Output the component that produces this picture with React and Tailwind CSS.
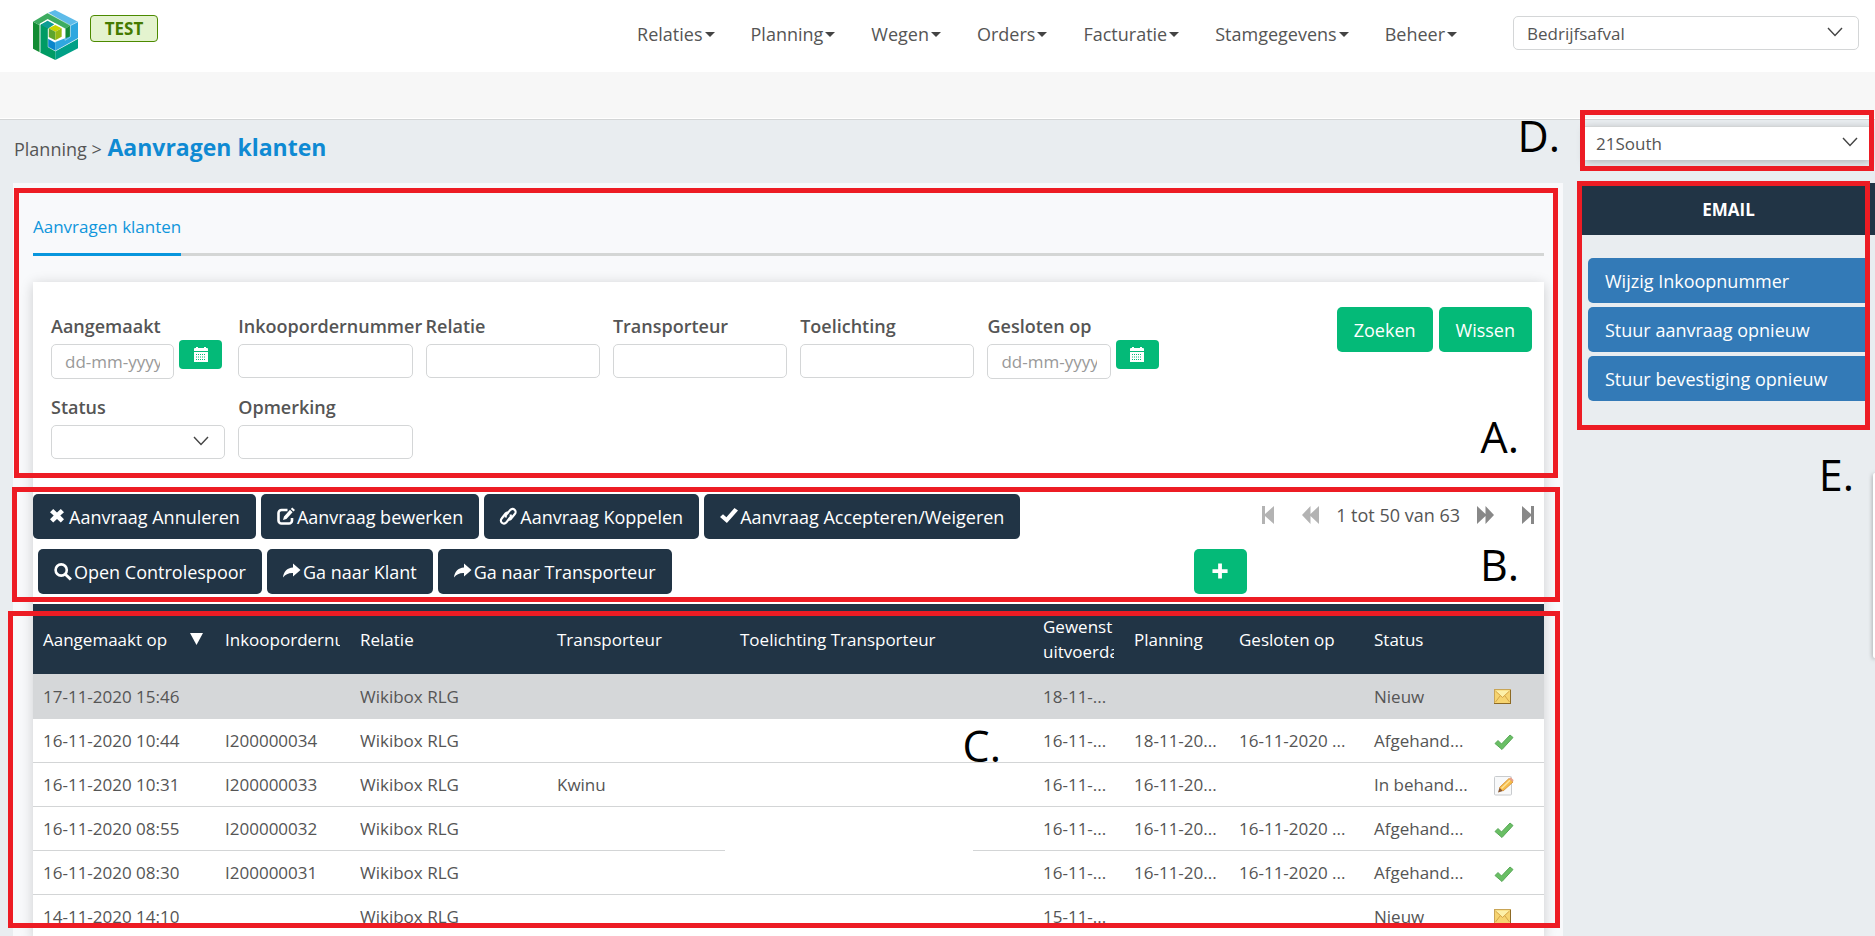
import { useState } from 'react';

const menuItems = ['Relaties', 'Planning', 'Wegen', 'Orders', 'Facturatie', 'Stamgegevens', 'Beheer'];

const requests = [
  { created: '17-11-2020 15:46', order: '', relation: 'Wikibox RLG', carrier: '', wanted: '18-11-...', planning: '', closed: '', status: 'Nieuw', icon: 'mail' },
  { created: '16-11-2020 10:44', order: 'I200000034', relation: 'Wikibox RLG', carrier: '', wanted: '16-11-...', planning: '18-11-20...', closed: '16-11-2020 ...', status: 'Afgehand...', icon: 'check' },
  { created: '16-11-2020 10:31', order: 'I200000033', relation: 'Wikibox RLG', carrier: 'Kwinu', wanted: '16-11-...', planning: '16-11-20...', closed: '', status: 'In behand...', icon: 'edit' },
  { created: '16-11-2020 08:55', order: 'I200000032', relation: 'Wikibox RLG', carrier: '', wanted: '16-11-...', planning: '16-11-20...', closed: '16-11-2020 ...', status: 'Afgehand...', icon: 'check', blank: true },
  { created: '16-11-2020 08:30', order: 'I200000031', relation: 'Wikibox RLG', carrier: '', wanted: '16-11-...', planning: '16-11-20...', closed: '16-11-2020 ...', status: 'Afgehand...', icon: 'check' },
  { created: '14-11-2020 14:10', order: '', relation: 'Wikibox RLG', carrier: '', wanted: '15-11-...', planning: '', closed: '', status: 'Nieuw', icon: 'mail' },
];

const Logo = () => (
  <svg viewBox="0 0 135 150" className="h-[50px] w-[45px]" aria-label="Logo">
    <path d="M0 35 20 46V127L0 116Z" fill="#128c33" />
    <path d="M46 8 66 0 135 35 112 47Z" fill="#5dbbe9" />
    <path d="M0 35 44 9 112 46 97 56 44 27 20 41V46Z" fill="#3dac60" />
    <path d="M97 56 112 46V81L97 90Z" fill="#118a38" />
    <path d="M135 35V85L67 123V96L112 79V47Z" fill="#2fa7df" />
    <path d="M45 86 67 98V123L45 111Z" fill="#0a86cb" />
    <path d="M22 44 45 32V111L67 124V150L22 128Z" fill="#009b64" />
    <path d="M24 44 44 32 64 43 45 56Z" fill="#0f9c95" />
    <path d="M67 124 135 86V115L67 150Z" fill="#00a087" />
    <path d="M47 55 67 45 86 55 67 65Z" fill="#c9d400" />
    <path d="M47 55 67 65V91L47 81Z" fill="#5da52e" />
    <path d="M67 65 86 55V80L67 91Z" fill="#95b914" />
    <path d="M21 127V43L44 30 66 42M42 8 112 46V81L96 91V56L66 40M113 46 135 35M45 57V111L67 123 135 85" fill="none" stroke="#fff" strokeOpacity="0.6" strokeWidth="2" />
  </svg>
);

const Chevron = ({ className = '' }) => (
  <svg viewBox="0 0 16 10" className={`pointer-events-none absolute h-[10px] w-4 ${className}`} fill="none" stroke="#444" strokeWidth="1.4">
    <path d="M1 1l7 7.5L15 1" />
  </svg>
);

const glyphs = {
  remove: <path d="M4.2 1 8 4.6 11.800 1 15 4.200 11.300 7.600 15 11.200 11.800 14.500 8 10.900 4.200 14.500 1 11.200 4.700 7.600 1 4.200Z" />,
  edit: (
    <>
      <path d="M10.500 2H4.500A3 3 0 0 0 1.500 5v7.500a3 3 0 0 0 3 3h7.500a3 3 0 0 0 3-3V10" fill="none" stroke="currentColor" strokeWidth="2.600" />
      <path d="M6 12 7 8.500 13 1.800 15.600 4.200 9.400 11ZM13.800 1 15.200 -0.500 18 2 16.500 3.400Z" />
    </>
  ),
  link: (
    <g fill="none" stroke="currentColor" strokeWidth="2.200">
      <path d="M5.800 9.500 5.600 7.500 10.300 1.900A3 3 0 0 1 14.800 6L11 10.800Q9.500 12 8 11.300" />
      <path d="M10.700 6.500 10.900 8.500 6.200 14.600A3 3 0 0 1 1.700 10.500L5.500 5.600Q7 4.200 8.500 5" />
    </g>
  ),
  ok: <path d="M0 9 3 6.200 6.400 9.200 14.500 0 18 2.500 6.900 15Z" />,
  search: (
    <>
      <circle cx="7.200" cy="7" r="5.600" fill="none" stroke="currentColor" strokeWidth="2.600" />
      <path d="M10 12 12 10 18 15.400 15.800 17.600Z" />
    </>
  ),
  share: <path d="M10 0.500 17.500 7 10 13.500V10C5.500 9.800 2.500 11.500 0 14.500 0.500 9 4 4.800 10 4.500Z" />,
  plus: <path d="M6.500 0.500h4v6h6v4h-6v6h-4v-6h-6v-4h6Z" />,
};

const Glyph = ({ name, className = 'size-[18px]' }) => (
  <svg viewBox="0 0 18 18" className={`shrink-0 overflow-visible ${className}`} fill="currentColor" aria-hidden="true">
    {glyphs[name]}
  </svg>
);

const CalendarIcon = () => (
  <svg viewBox="0 0 14 15" className="h-[15px] w-[14px]" aria-hidden="true">
    <path d="M0 4V2Q0 1 1 1H2V0H4V1H10V0H12V1H13Q14 1 14 2V4ZM0 5H14V15H0Z" fill="#fff" />
    <path d="M2 7.500h10M2 10h10M2 12.500h10" stroke="#04ba78" strokeWidth="1" strokeDasharray="1 1" />
  </svg>
);

const StatusIcon = ({ type }) => {
  if (type === 'mail') {
    return (
      <svg viewBox="0 0 17 15" className="h-[15px] w-[17px]" role="img" aria-label="Nieuw">
        <rect x="0.500" y="0.500" width="16" height="14" fill="#f6d470" stroke="#c9a556" />
        <path d="M1 1.500h15L8.500 8Z" fill="#fdf0a8" />
        <path d="M1.500 2 8.500 8.500 15.500 2M1.500 13 6 7M15.500 13 11 7" fill="none" stroke="#d5a548" />
        <path d="M0 14.500h17M16.500 1v13" stroke="#8d6a25" />
      </svg>
    );
  }
  if (type === 'check') {
    return (
      <svg viewBox="0 0 20 17" className="mt-[3px] h-[17px] w-5" role="img" aria-label="Afgehandeld">
        <path d="M1 9.500 4 6.500 7.500 10 16 1 19 3.500 8 15.500Z" fill="#69bf64" stroke="#5aa859" strokeLinejoin="round" />
      </svg>
    );
  }
  return (
    <svg viewBox="0 0 20 20" className="mt-[3px] size-5" role="img" aria-label="In behandeling">
      <rect x="0.500" y="0.500" width="17" height="18.500" rx="1" fill="#f8f9fa" stroke="#c8cbce" />
      <path d="M4 16.500 5.500 11.500 9 15Z" fill="#8a5a35" />
      <path d="M5.500 11.500 15 2.500 19 6 9 15Z" fill="#f7bd4a" stroke="#d99a45" />
      <path d="M7.500 12.500 16 4.300" stroke="#fde39b" strokeWidth="1.500" />
      <path d="M15 2.500 16.500 1.200 19.500 4 19 6Z" fill="#e9a08a" />
    </svg>
  );
};

const inputClass = 'w-full rounded-[5px] border border-[#d4d6d7] bg-white px-[13px] text-[17px] text-[#555] placeholder:text-[#999]';

const labelClass = 'block h-[30px] whitespace-nowrap text-lg leading-[24px] font-semibold';

const TextField = ({ id, label }) => (
  <div className="min-w-0">
    <label htmlFor={id} className={labelClass}>{label}</label>
    <input id={id} type="text" className={`${inputClass} h-[34px]`} />
  </div>
);

const DateField = ({ id, label }) => (
  <div className="min-w-0">
    <label htmlFor={id} className={labelClass}>{label}</label>
    <div className="flex items-start">
      <input id={id} type="text" placeholder="dd-mm-yyyy" className={`${inputClass} h-[35px] min-w-0 flex-1`} />
      <button type="button" aria-label={`Kies datum ${label}`} className="-mt-1 mr-[3px] ml-[5px] flex h-[29px] w-[43px] shrink-0 items-center justify-center rounded bg-[#04ba78]">
        <CalendarIcon />
      </button>
    </div>
  </div>
);

const ActionButton = ({ icon, children }) => (
  <button className="flex h-[45px] items-center gap-[2px] rounded-[5px] bg-[#213445] px-4 text-lg whitespace-nowrap text-white">
    <Glyph name={icon} />
    {children}
  </button>
);

const GreenButton = ({ children }) => (
  <button className="h-[45px] rounded-[5px] bg-[#04ba78] px-[17px] text-lg text-white">{children}</button>
);

const SideButton = ({ children }) => (
  <button className="h-[45px] rounded-l-[5px] bg-[#337ab7] px-[17px] text-left text-lg text-white">{children}</button>
);

const PagerButton = ({ label, className, children }) => (
  <button aria-label={label} className={className}>
    <svg viewBox="0 0 17 18" className="h-[18px] w-[17px]" fill="currentColor">{children}</svg>
  </button>
);

// Red frame that marks a part of the screen
const Frame = ({ className }) => (
  <div className={`pointer-events-none absolute border-[5px] border-[#ed1c24] ${className}`} />
);

const Mark = ({ className, children }) => (
  <span className={`pointer-events-none absolute text-[43px] leading-[60px] text-black ${className}`}>{children}</span>
);

const App = () => {
  const [selected, setSelected] = useState(0);

  return (
    <div className="relative flex h-screen flex-col overflow-hidden bg-[#e9edf0] font-['Open_Sans',sans-serif] text-[17px] leading-[25px] text-[#555]">
      {/* Header */}
      <header className="flex h-[72px] shrink-0 items-start bg-white pr-4 pl-[33px]">
        <a href="#" className="mt-[10px]"><Logo /></a>
        <span className="mt-[15px] ml-3 flex h-[27px] w-[68px] items-center justify-center rounded border border-[#4c8a00] bg-[#e4f3cf] font-bold text-[#447a00]">
          TEST
        </span>
        <nav className="mt-[22px] mr-[56px] ml-auto flex gap-9 text-lg leading-[25px]">
          {menuItems.map((item) => (
            <a key={item} href="#" className="flex items-center">
              {item}
              <svg viewBox="0 0 10 5" className="ml-[2px] h-[5px] w-[10px]" fill="#444"><path d="M0 0h10L5 5Z" /></svg>
            </a>
          ))}
        </nav>
        <div className="relative mt-4 w-[346px]">
          <select aria-label="Afdeling" className={`${inputClass} h-[34px] appearance-none`}>
            <option>Bedrijfsafval</option>
          </select>
          <Chevron className="top-[11px] right-4" />
        </div>
      </header>
      <div className="h-12 shrink-0 border-b border-[#d3d5d6] bg-[#f7f7f7] shadow-[inset_0_-1px_0_#fff]" />

      <div className="flex min-h-0 flex-1">
        {/* Main column */}
        <main className="ml-[13px] flex min-w-0 flex-1 flex-col">
          <div className="flex h-[63px] shrink-0 items-baseline pt-[9px] pl-px">
            <span className="text-lg whitespace-pre">Planning &gt; </span>
            <h1 className="ml-px text-[23px] leading-[36px] font-bold text-[#0f8ad3]">Aanvragen klanten</h1>
          </div>
          <div className="flex flex-1 flex-col bg-[#f8f9fb] pr-[19px] pl-5">
            <div className="mt-[26px] flex h-[47px] shrink-0 border-b-[3px] border-[#d4d6d5]">
              <a href="#" className="-mb-[3px] border-b-[3px] border-[#0896dd] pt-[5px] text-[#0f96dc]">Aanvragen klanten</a>
            </div>

            <section className="mt-[26px] flex-1 bg-white shadow-[0_2px_12px_rgba(0,0,0,0.18)]">
              {/* Search form */}
              <form className="flex items-start justify-between pt-[32px] pr-3 pl-[18px]" onSubmit={(e) => e.preventDefault()}>
                <div className="grid w-3/4 grid-cols-6 gap-x-[13px] gap-y-4">
                  <DateField id="aangemaakt" label="Aangemaakt" />
                  <TextField id="inkoopordernummer" label="Inkoopordernummer" />
                  <TextField id="relatie" label="Relatie" />
                  <TextField id="transporteur" label="Transporteur" />
                  <TextField id="toelichting" label="Toelichting" />
                  <DateField id="gesloten" label="Gesloten op" />
                  <div>
                    <label htmlFor="status" className={labelClass}>Status</label>
                    <div className="relative">
                      <select id="status" className={`${inputClass} h-[34px] appearance-none`}>
                        <option></option>
                      </select>
                      <Chevron className="top-[11px] right-4" />
                    </div>
                  </div>
                  <TextField id="opmerking" label="Opmerking" />
                </div>
                <div className="-mt-[7px] flex gap-[6px]">
                  <GreenButton>Zoeken</GreenButton>
                  <GreenButton>Wissen</GreenButton>
                </div>
              </form>

              {/* Toolbar */}
              <div className="mt-[35px] flex h-[45px] items-center">
                <div className="flex gap-[5px]">
                  <ActionButton icon="remove">Aanvraag Annuleren</ActionButton>
                  <ActionButton icon="edit">Aanvraag bewerken</ActionButton>
                  <ActionButton icon="link">Aanvraag Koppelen</ActionButton>
                  <ActionButton icon="ok">Aanvraag Accepteren/Weigeren</ActionButton>
                </div>
                <div className="mr-[10px] mb-1 ml-auto flex items-center text-[#888]">
                  <PagerButton label="Eerste" className="text-[#b3b3b3]"><path d="M0 0h3v8L12 0v18L3 10v8H0Z" /></PagerButton>
                  <PagerButton label="Vorige" className="ml-[23px] text-[#b3b3b3]"><path d="M0 9 8.500 0v8L17 0v18L8.500 10v8Z" /></PagerButton>
                  <span className="mx-[17px] text-lg text-[#555]">1 tot 50 van 63</span>
                  <PagerButton label="Volgende"><path d="M17 9 8.500 0v8L0 0v18L8.500 10v8Z" /></PagerButton>
                  <PagerButton label="Laatste" className="ml-[23px]"><path d="M17 0h-3v8L5 0v18L14 10v8H17Z" /></PagerButton>
                </div>
              </div>
              <div className="mt-[10px] flex gap-[5px] pl-[5px]">
                <ActionButton icon="search">Open Controlespoor</ActionButton>
                <ActionButton icon="share">Ga naar Klant</ActionButton>
                <ActionButton icon="share">Ga naar Transporteur</ActionButton>
                <button aria-label="Toevoegen" className="mr-[297px] ml-auto flex h-[45px] w-[53px] items-center justify-center rounded-[5px] bg-[#04ba78] text-white">
                  <Glyph name="plus" className="size-[17px]" />
                </button>
              </div>

              {/* Requests */}
              <table className="mt-[10px] w-full table-fixed border-separate border-spacing-0 text-left">
                <colgroup>
                  <col className="w-[182px]" />
                  <col className="w-[135px]" />
                  <col className="w-[197px]" />
                  <col className="w-[183px]" />
                  <col />
                  <col className="w-[91px]" />
                  <col className="w-[105px]" />
                  <col className="w-[135px]" />
                  <col className="w-[120px]" />
                  <col className="w-[60px]" />
                </colgroup>
                <thead>
                  <tr className="h-[70px] bg-[#213445] text-white [&>th]:px-[10px] [&>th]:font-normal">
                    <th>
                      <div className="flex items-center justify-between pr-[2px]">
                        Aangemaakt op
                        <svg viewBox="0 0 13 12" className="h-3 w-[13px]" fill="#fff"><path d="M0 0h13L6.500 12Z" /></svg>
                      </div>
                    </th>
                    <th><div className="overflow-hidden">Inkoopordernummer</div></th>
                    <th>Relatie</th>
                    <th>Transporteur</th>
                    <th>Toelichting Transporteur</th>
                    <th><div className="overflow-hidden">Gewenst uitvoerdatum</div></th>
                    <th>Planning</th>
                    <th>Gesloten op</th>
                    <th>Status</th>
                    <th></th>
                  </tr>
                </thead>
                <tbody>
                  {requests.map((row, i) => (
                    <tr
                      key={row.created}
                      onClick={() => setSelected(i)}
                      className={`h-[44px] whitespace-nowrap first:h-[45px] [&>td]:border-b [&>td]:px-[10px] ${i === selected ? 'bg-[#d5d7d9] [&>td]:border-[#d5d7d9]' : 'bg-white [&>td]:border-[#d3d5d6]'}`}
                    >
                      <td>{row.created}</td>
                      <td>{row.order}</td>
                      <td>{row.relation}</td>
                      <td>{row.carrier}</td>
                      <td className="relative">
                        {row.blank && <span className="absolute -bottom-px -left-[5px] h-[30px] w-[248px] bg-white" />}
                      </td>
                      <td>{row.wanted}</td>
                      <td>{row.planning}</td>
                      <td>{row.closed}</td>
                      <td>{row.status}</td>
                      <td><StatusIcon type={row.icon} /></td>
                    </tr>
                  ))}
                </tbody>
              </table>
            </section>
          </div>
        </main>

        {/* Sidebar */}
        <aside className="ml-[19px] w-[293px] shrink-0">
          <div className="relative mt-[6px] mr-[5px] ml-[3px] shadow-[0_2px_8px_rgba(0,0,0,0.25)]">
            <select aria-label="Locatie" className="h-[34px] w-full appearance-none border-t border-[#d3d5d6] bg-white px-[11px]">
              <option>21South</option>
            </select>
            <Chevron className="top-[11px] right-3" />
          </div>
          <h2 className="mt-[23px] flex h-[52px] items-center justify-center bg-[#213445] font-bold text-white">EMAIL</h2>
          <div className="mt-[23px] mr-[7px] ml-[6px] flex flex-col gap-1">
            <SideButton>Wijzig Inkoopnummer</SideButton>
            <SideButton>Stuur aanvraag opnieuw</SideButton>
            <SideButton>Stuur bevestiging opnieuw</SideButton>
          </div>
        </aside>
      </div>

      <div className="absolute top-[473px] right-0 h-[185px] w-[2px] rounded-l bg-white shadow-[0_1px_4px_rgba(0,0,0,0.5)]" />

      {/* Marked areas */}
      <Frame className="top-[188px] right-[317px] left-[14px] h-[290px]" />
      <Frame className="top-[487px] right-[315px] left-[12px] h-[115px]" />
      <Frame className="top-[611px] right-[315px] left-[8px] h-[317px]" />
      <Frame className="top-[110px] right-[1px] h-[61px] w-[294px]" />
      <Frame className="top-[181px] right-[5px] h-[249px] w-[293px]" />
      <Mark className="top-[407px] right-[356px]">A.</Mark>
      <Mark className="top-[535px] right-[356px]">B.</Mark>
      <Mark className="top-[716px] right-[874px]">C.</Mark>
      <Mark className="top-[106px] right-[315px]">D.</Mark>
      <Mark className="top-[445px] right-[21px]">E.</Mark>
    </div>
  );
};

export default App;
